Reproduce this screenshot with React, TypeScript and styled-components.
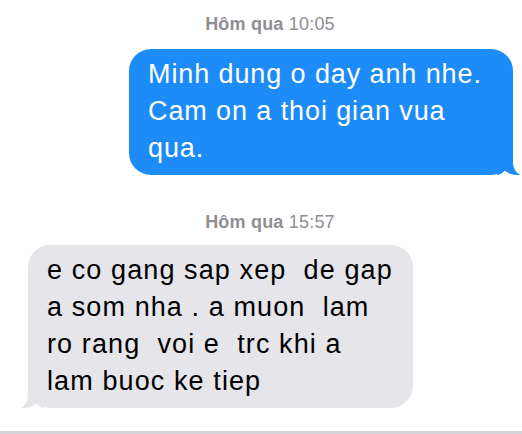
import React from "react";
import styled, { createGlobalStyle } from "styled-components";

const Global = createGlobalStyle`
  html, body { margin: 0; padding: 0; background: #ffffff; }
  body { font-family: "Liberation Sans", Arial, sans-serif; }
`;

const Screen = styled.div`
  width: 522px;
  height: 434px;
  display: flex;
  flex-direction: column;
  background: #ffffff;
  overflow: hidden;
`;

const Stamp = styled.div<{ $top: number }>`
  margin-top: ${(p) => p.$top}px;
  padding-left: 18px;
  text-align: center;
  font-size: 18px;
  line-height: 20px;
  letter-spacing: 0.2px;
  color: #8e8e93;
  b { font-weight: 700; }
`;

const Row = styled.div<{ $out?: boolean; $top: number }>`
  display: flex;
  justify-content: ${(p) => (p.$out ? "flex-end" : "flex-start")};
  margin-top: ${(p) => p.$top}px;
  padding: ${(p) => (p.$out ? "0 9px 0 0" : "0 0 0 28px")};
`;

const Bubble = styled.div<{ $out?: boolean; $w: number }>`
  position: relative;
  width: ${(p) => p.$w}px;
  box-sizing: border-box;
  padding: 7px 10px 8px 19px;
  border-radius: 22px;
  background: ${(p) => (p.$out ? "#1d8cf9" : "#e5e5ea")};
  color: ${(p) => (p.$out ? "#ffffff" : "#000000")};
  font-size: 27px;
  letter-spacing: ${(p) => (p.$out ? "0.9px" : "1.1px")};
  line-height: 37px;
  white-space: pre-wrap;
`;

const Tail = styled.svg<{ $out?: boolean }>`
  position: absolute;
  bottom: -1px;
  width: 24px;
  height: 28px;
  ${(p) => (p.$out ? "right: -8px;" : "left: -8px; transform: scaleX(-1);")}
`;

const BottomBar = styled.div`
  margin-top: auto;
  height: 3px;
  background: #d4d4d8;
`;

const TailShape = ({ out, color }: { out?: boolean; color: string }) => (
  <Tail $out={out} viewBox="0 0 24 28">
    <path
      d="M0 0 H16 V14 C16 20 18.5 24.5 23.5 27 C17 27.5 11 25.5 8 22.5 C5.5 25 3 26.5 0 27 Z"
      fill={color}
    />
  </Tail>
);

export default function App() {
  return (
    <>
      <Global />
      <Screen>
        <Stamp $top={14}>
          <b>Hôm qua</b> 10:05
        </Stamp>
        <Row $out $top={15}>
          <Bubble $out $w={384}>
            {"Minh dung o day anh nhe.\nCam on a thoi gian vua\nqua."}
            <TailShape out color="#1d8cf9" />
          </Bubble>
        </Row>
        <Stamp $top={37}>
          <b>Hôm qua</b> 15:57
        </Stamp>
        <Row $top={13}>
          <Bubble $w={385}>
            {"e co gang sap xep  de gap\na som nha . a muon  lam\nro rang  voi e  trc khi a\nlam buoc ke tiep"}
            <TailShape color="#e5e5ea" />
          </Bubble>
        </Row>
        <BottomBar />
      </Screen>
    </>
  );
}
